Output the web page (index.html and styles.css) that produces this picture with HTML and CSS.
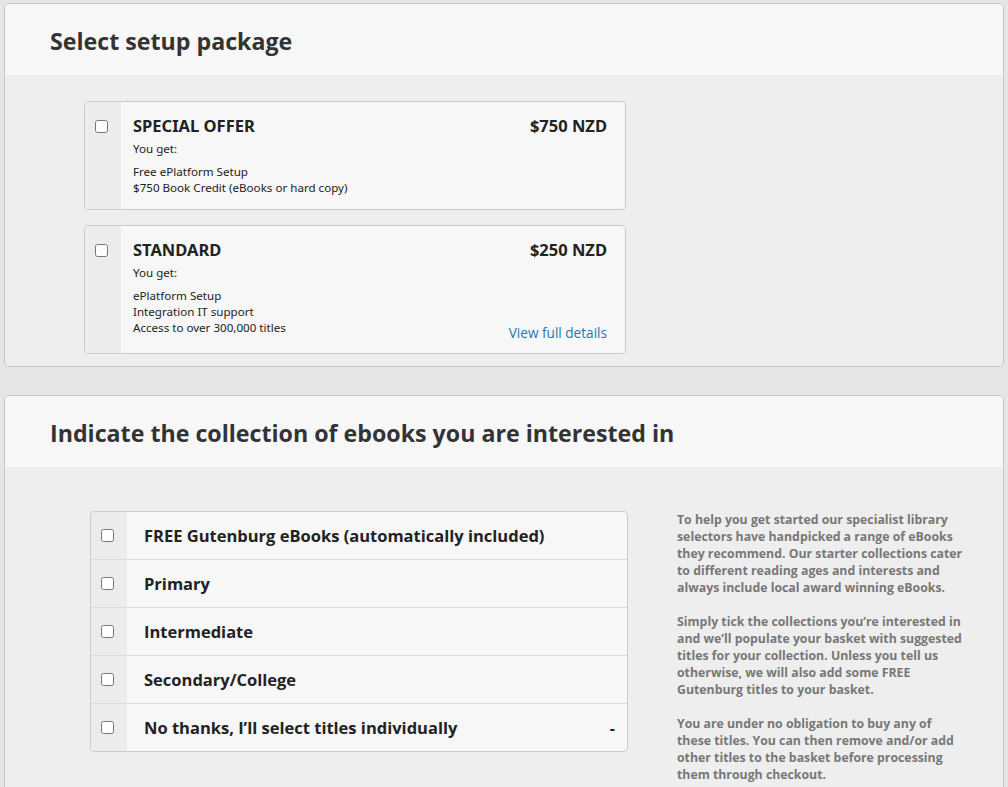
FILE: index.html
```html
<!DOCTYPE html>
<html>
<head>
<meta charset="utf-8">
<link rel="stylesheet" href="styles.css">
</head>
<body>
<section class="panel">
  <header class="panel-head"><h2>Select setup package</h2></header>
  <div class="panel-body packages">
    <label class="pkg">
      <span class="pkg-check"><input type="checkbox"></span>
      <span class="pkg-main">
        <span class="pkg-top"><span class="pkg-name">SPECIAL OFFER</span><span class="pkg-price">$750 NZD</span></span>
        <span class="pkg-get">You get:</span>
        <span class="pkg-foot">
          <span class="pkg-list"><span>Free ePlatform Setup</span><span>$750 Book Credit (eBooks or hard copy)</span></span>
        </span>
      </span>
    </label>
    <label class="pkg">
      <span class="pkg-check"><input type="checkbox"></span>
      <span class="pkg-main">
        <span class="pkg-top"><span class="pkg-name">STANDARD</span><span class="pkg-price">$250 NZD</span></span>
        <span class="pkg-get">You get:</span>
        <span class="pkg-foot">
          <span class="pkg-list"><span>ePlatform Setup</span><span>Integration IT support</span><span>Access to over 300,000 titles</span></span>
          <a class="pkg-link" href="#">View full details</a>
        </span>
      </span>
    </label>
  </div>
</section>

<section class="panel panel-second">
  <header class="panel-head"><h2>Indicate the collection of ebooks you are interested in</h2></header>
  <div class="panel-body collections">
    <ul class="coll-list">
      <li class="coll"><span class="coll-check"><input type="checkbox"></span><span class="coll-name">FREE Gutenburg eBooks (automatically included)</span></li>
      <li class="coll"><span class="coll-check"><input type="checkbox"></span><span class="coll-name">Primary</span></li>
      <li class="coll"><span class="coll-check"><input type="checkbox"></span><span class="coll-name">Intermediate</span></li>
      <li class="coll"><span class="coll-check"><input type="checkbox"></span><span class="coll-name">Secondary/College</span></li>
      <li class="coll"><span class="coll-check"><input type="checkbox"></span><span class="coll-name">No thanks, I’ll select titles individually</span><span class="coll-dash">-</span></li>
    </ul>
    <div class="coll-info">
      <p>To help you get started our specialist library selectors have handpicked a range of eBooks they recommend. Our starter collections cater to different reading ages and interests and always include local award winning eBooks.</p>
      <p>Simply tick the collections you’re interested in and we’ll populate your basket with suggested titles for your collection. Unless you tell us otherwise, we will also add some FREE Gutenburg titles to your basket.</p>
      <p>You are under no obligation to buy any of these titles. You can then remove and/or add other titles to the basket before processing them through checkout.</p>
    </div>
  </div>
</section>
</body>
</html>
```

FILE: styles.css
```css
html, body {
  margin: 0;
  padding: 0;
}
body {
  background: #e6e6e6;
  padding: 3px 4px 0 4px;
  font-family: "Open Sans", "Noto Sans", sans-serif;
  color: #333;
  overflow: hidden;
  height: 784px;
}
.panel {
  border: 1px solid #c6c6c6;
  border-radius: 5px;
  background: #eeeeee;
  overflow: hidden;
}
.panel-second {
  margin-top: 28px;
}
.panel-head {
  background: #f7f7f7;
  height: 71px;
  box-sizing: border-box;
  padding: 21px 45px 0;
}
.panel-head h2 {
  margin: 0;
  font-size: 23.2px;
  line-height: 32px;
  font-weight: 700;
  color: #333;
}
.packages {
  padding: 26px 0 12px 79px;
  display: flex;
  flex-direction: column;
  gap: 15px;
}
.pkg {
  width: 542px;
  box-sizing: border-box;
  display: flex;
  border: 1px solid #cbcbcb;
  border-radius: 4px;
  background: #f7f7f7;
  overflow: hidden;
  font-family: "Noto Sans", "Open Sans", sans-serif;
  color: #222;
}
.pkg-check {
  width: 36px;
  flex: none;
  background: #ececec;
  display: flex;
  justify-content: flex-start;
  padding-left: 10px;
  box-sizing: border-box;
  padding-top: 18px;
}
.pkg-check input, .coll-check input {
  margin: 0;
  width: 13px;
  height: 13px;
}
.pkg-main {
  flex: 1;
  display: flex;
  flex-direction: column;
  padding: 12px 18px 13px 12px;
}
.pkg-top {
  display: flex;
  justify-content: space-between;
  align-items: baseline;
}
.pkg-name, .pkg-price {
  font-size: 16.5px;
  line-height: 23px;
  font-weight: 700;
  color: #222;
}
.pkg-get {
  font-size: 11.6px;
  line-height: 16px;
  margin-top: 4px;
}
.pkg-foot {
  display: flex;
  justify-content: space-between;
  align-items: flex-start;
  margin-top: 7px;
}
.pkg-list {
  display: flex;
  flex-direction: column;
  font-size: 11.6px;
  line-height: 16px;
}
.pkg-link {
  font-family: "Open Sans", sans-serif;
  font-size: 13.6px;
  line-height: 14px;
  color: #2479b3;
  text-decoration: none;
  margin-top: 38px;
}
.collections {
  padding: 44px 0 40px 85px;
  display: flex;
  align-items: flex-start;
}
.coll-list {
  list-style: none;
  margin: 0;
  padding: 0;
  width: 538px;
  flex: none;
  border: 1px solid #cbcbcb;
  border-radius: 4px;
  background: #f7f7f7;
  overflow: hidden;
  box-sizing: border-box;
}
.coll {
  display: flex;
  align-items: center;
  height: 48px;
  box-sizing: border-box;
  border-top: 1px solid #dcdcdc;
}
.coll:first-child {
  border-top: none;
  height: 47px;
}
.coll-check {
  width: 36px;
  align-self: stretch;
  flex: none;
  background: #ececec;
  display: flex;
  align-items: center;
  justify-content: flex-start;
  padding-left: 10px;
  box-sizing: border-box;
}
.coll-name {
  flex: 1;
  padding-left: 17px;
  font-size: 16.5px;
  font-weight: 700;
  color: #222;
}
.coll-dash {
  padding-right: 12px;
  font-size: 16px;
  font-weight: 700;
  color: #222;
}
.coll-info {
  margin-left: 49px;
  width: 288px;
  font-size: 12.3px;
  line-height: 17px;
  font-weight: 700;
  color: #777;
  margin-top: 0;
}
.coll-info p {
  margin: 0 0 17px;
}
```
